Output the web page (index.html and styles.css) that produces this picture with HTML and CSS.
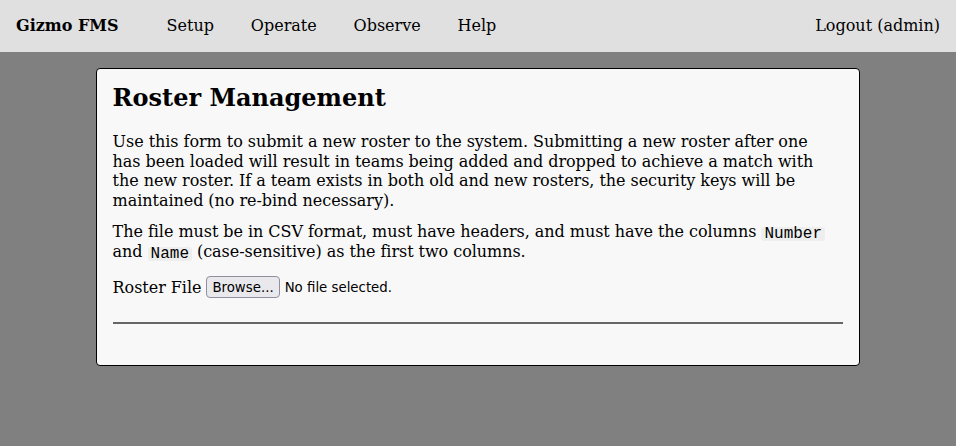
FILE: index.html
```html
<!DOCTYPE html>
<html>
<head>
<meta charset="utf-8">
<title>Gizmo FMS - Roster Management</title>
<link rel="stylesheet" href="styles.css">
</head>
<body>
<nav class="navbar">
  <div class="nav-left">
    <a class="brand" href="#">Gizmo FMS</a>
    <a class="nav-link" href="#">Setup</a>
    <a class="nav-link" href="#">Operate</a>
    <a class="nav-link" href="#">Observe</a>
    <a class="nav-link" href="#">Help</a>
  </div>
  <a class="nav-link logout" href="#">Logout (admin)</a>
</nav>
<main class="card">
  <h1 class="title">Roster Management</h1>
  <p class="para">Use this form to submit a new roster to the system. Submitting a new roster after one has been loaded will result in teams being added and dropped to achieve a match with the new roster. If a team exists in both old and new rosters, the security keys will be maintained (no re-bind necessary).</p>
  <p class="para">The file must be in CSV format, must have headers, and must have the columns <code class="code">Number</code> and <code class="code">Name</code> (case-sensitive) as the first two columns.</p>
  <form class="form">
    <div class="field">
      <span class="label">Roster File</span>
      <span class="file-input"><span class="file-btn">Browse...</span><span class="file-name">No file selected.</span></span>
    </div>
    <hr class="rule">
  </form>
</main>
</body>
</html>
```

FILE: styles.css
```css
html, body {
  margin: 0;
  padding: 0;
}
body {
  background: #808080;
  font-family: "DejaVu Serif", serif;
  font-size: 16px;
  color: #000;
  min-height: 446px;
}
.navbar {
  background: #e0e0e0;
  height: 52px;
  display: flex;
  align-items: center;
  justify-content: space-between;
  padding: 0 16px 2px;
  box-sizing: border-box;
  font-size: 16px;
}
.nav-left {
  display: flex;
  align-items: center;
  gap: 36.8px;
}
.navbar a {
  color: #000;
  text-decoration: none;
}
.brand {
  font-weight: bold;
  margin-right: 11.2px;
}
.card {
  display: block;
  width: 80%;
  margin: 16px auto 0;
  background: #f8f8f8;
  border: 1px solid #000;
  border-radius: 4px;
  padding: 14px 16px 41px;
  box-sizing: border-box;
}
.title {
  font-size: 24px;
  font-weight: bold;
  margin: 0 0 20px;
}
.para {
  margin: 0 4px 12px 0;
  letter-spacing: -0.05px;
  line-height: 19.5px;
}
.code {
  display: inline-block;
  font-family: "Liberation Mono", monospace;
  font-size: 16px;
  letter-spacing: 0;
  line-height: 14px;
  height: 14px;
  background: #eeeeee;
  border-radius: 3px;
  padding: 0 3px;
  vertical-align: -1px;
}
.form {
  margin: 0;
}
.field {
  display: flex;
  align-items: center;
  gap: 5px;
  margin-top: 15px;
  letter-spacing: -0.05px;
}
.file-input {
  display: inline-flex;
  align-items: center;
  gap: 5px;
  letter-spacing: 0;
  font-family: "DejaVu Sans", sans-serif;
  font-size: 13.33px;
}
.file-btn {
  background: #e9e9ed;
  border: 1px solid #8f8f9d;
  border-radius: 4px;
  padding: 2px 5px;
  height: 22px;
  box-sizing: border-box;
  display: inline-flex;
  align-items: center;
}
.rule {
  border: none;
  border-top: 2px solid #666;
  margin: 24px 0 0;
}
```
